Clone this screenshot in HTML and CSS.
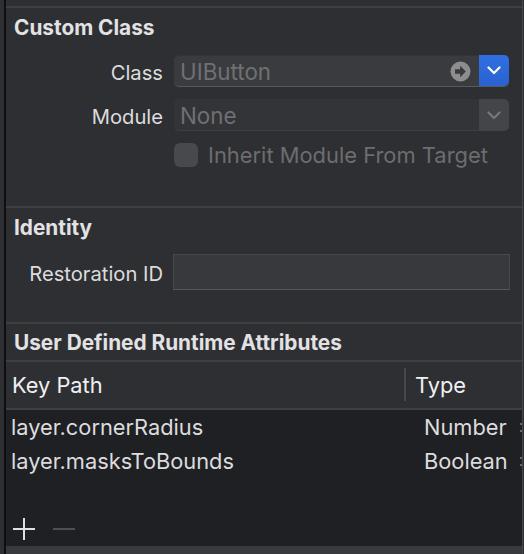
FILE: index.html
```html
<!DOCTYPE html>
<html>
<head>
<meta charset="utf-8">
<link rel="stylesheet" href="styles.css">
</head>
<body>
<div class="frame">
  <div class="panel">
    <div class="topstrip"></div>

    <section class="sec sec-custom">
      <h2 class="heading">Custom Class</h2>
      <div class="row">
        <span class="label">Class</span>
        <div class="combo">
          <span class="combo-text">UIButton</span>
          <svg class="goto" width="21" height="21" viewBox="0 0 21 21">
            <circle cx="10.5" cy="10.5" r="10" fill="#8d8d90"/>
            <path d="M5 8.3h5.2V4.8l5.6 5.7-5.6 5.7v-3.5H5z" fill="#3a3b3e"/>
          </svg>
          <span class="combo-btn blue">
            <svg width="14" height="9" viewBox="0 0 14 9"><path d="M1.5 1.5l5.5 5.5 5.5-5.5" fill="none" stroke="#fff" stroke-width="2.2" stroke-linecap="round" stroke-linejoin="round"/></svg>
          </span>
        </div>
      </div>
      <div class="row">
        <span class="label">Module</span>
        <div class="combo disabled">
          <span class="combo-text">None</span>
          <span class="combo-btn gray">
            <svg width="14" height="9" viewBox="0 0 14 9"><path d="M1.5 1.5l5.5 5.5 5.5-5.5" fill="none" stroke="#77787b" stroke-width="2.2" stroke-linecap="round" stroke-linejoin="round"/></svg>
          </span>
        </div>
      </div>
      <div class="row check-row">
        <span class="checkbox"></span>
        <span class="check-label">Inherit Module From Target</span>
      </div>
    </section>

    <section class="sec sec-identity">
      <h2 class="heading">Identity</h2>
      <div class="row">
        <span class="label">Restoration ID</span>
        <div class="textfield"></div>
      </div>
    </section>

    <section class="sec sec-udra">
      <h2 class="heading">User Defined Runtime Attributes</h2>
    </section>

    <div class="table-head">
      <span class="col-key">Key Path</span>
      <span class="col-div"></span>
      <span class="col-type">Type</span>
    </div>

    <div class="table-body">
      <div class="trow"><span class="tkey">layer.cornerRadius</span><span class="ttype">Number</span><span class="tcut"></span></div>
      <div class="trow"><span class="tkey">layer.masksToBounds</span><span class="ttype">Boolean</span><span class="tcut"></span></div>
      <div class="tools">
        <span class="plus"></span>
        <span class="minus"></span>
      </div>
    </div>
    <div class="bottombar"></div>
  </div>
</div>
</body>
</html>
```

FILE: styles.css
```css
* { box-sizing: border-box; margin: 0; padding: 0; }

html, body {
  width: 524px;
  height: 554px;
  overflow: hidden;
  background: #2e2f32;
}

body {
  font-family: Inter, "Noto Sans", "Liberation Sans", sans-serif;
  color: #dedee0;
}

.frame {
  display: flex;
  height: 554px;
  padding-left: 4px;
  padding-right: 1px;
}

.panel {
  flex: 1;
  display: flex;
  flex-direction: column;
  border-left: 2px solid #0e0e10;
  border-right: 1px solid #45464a;
  background: #2e2f32;
}

.topstrip {
  height: 8px;
  border-bottom: 2px solid #3e3f43;
  flex: none;
}

.sec {
  display: flex;
  flex-direction: column;
  border-bottom: 2px solid #3e3f43;
  flex: none;
}

.heading {
  font-size: 20.8px;
  font-weight: 700;
  color: #e2e2e4;
  padding-left: 8px;
  height: 24px;
  line-height: 24px;
}

.sec-custom { height: 200px; padding-top: 8px; }
.sec-identity { height: 116px; padding-top: 8px; }
.sec-udra { height: 38px; padding-top: 7px; }

.row {
  display: flex;
  align-items: center;
  height: 32px;
}

.sec-custom .row:nth-of-type(1) { margin-top: 15px; }
.sec-custom .row + .row { margin-top: 12px; }
.sec-custom .check-row { margin-top: 14px; height: 24px; }

.label {
  width: 168px;
  text-align: right;
  font-size: 20.2px;
  color: #dcdcde;
  padding-right: 11px;
  padding-top: 3px;
  flex: none;
}

.combo {
  width: 335px;
  height: 32px;
  display: flex;
  align-items: center;
  background: #3a3b3e;
  border-radius: 5px;
  border-bottom: 1px solid #58595c;
  border-top: 1px solid #333437;
}

.combo.disabled {
  background: #333437;
  border-bottom: 1px solid #3e3f42;
}

.combo-text {
  flex: 1;
  padding-left: 6px;
  font-size: 22.4px;
  color: #6f7073;
}

.goto {
  margin-right: 8px;
  flex: none;
}

.combo-btn {
  width: 30px;
  height: 32px;
  margin-top: -1px;
  margin-bottom: -1px;
  display: flex;
  align-items: center;
  justify-content: center;
  border-radius: 0 5px 5px 0;
  flex: none;
}

.combo-btn.blue {
  background: linear-gradient(#2f6fe3, #2a62cf);
  height: 31px;
  align-self: flex-start;
  margin-top: -1px;
}

.combo-btn.gray {
  background: #444548;
}

.check-row {
  padding-left: 168px;
}

.checkbox {
  width: 24px;
  height: 24px;
  border-radius: 6px;
  background: #48494c;
  flex: none;
}

.check-label {
  margin-left: 10px;
  font-size: 21.9px;
  color: #6c6d70;
}

.sec-identity .row {
  margin-top: 14px;
  height: 36px;
}

.sec-identity .label {
  width: 167px;
  padding-right: 10px;
}

.textfield {
  width: 337px;
  height: 36px;
  background: #38393c;
  border: 1px solid #48494c;
  border-bottom-color: #56575a;
}

.table-head {
  height: 48px;
  display: flex;
  align-items: center;
  border-bottom: 2px solid #3e3f43;
  flex: none;
  font-size: 21.8px;
  color: #f0f0f2;
}

.col-key {
  width: 398px;
  padding-left: 6px;
}

.col-div {
  width: 2px;
  height: 33px;
  background: #47484b;
  margin-top: -2px;
}

.col-type {
  padding-left: 9px;
}

.table-body {
  flex: 1;
  background: #1f2023;
  display: flex;
  flex-direction: column;
}

.trow {
  height: 34px;
  display: flex;
  align-items: center;
  font-size: 21.8px;
  color: #dcdcde;
  position: relative;
}

.tkey {
  width: 418px;
  padding-left: 5px;
}

.ttype {
  flex: 1;
}

.tcut {
  position: absolute;
  right: 0;
  top: 13px;
  width: 2px;
  height: 9px;
  border-top: 2px solid #6a6b6e;
  border-bottom: 2px solid #6a6b6e;
}

.tools {
  margin-top: auto;
  height: 34px;
  display: flex;
  align-items: center;
  padding-left: 7px;
  padding-bottom: 0;
}

.plus {
  width: 22px;
  height: 22px;
  position: relative;
  flex: none;
}

.plus::before, .plus::after {
  content: "";
  position: absolute;
  background: #e0e0e2;
}

.plus::before { left: 0; right: 0; top: 10px; height: 2px; }
.plus::after { top: 0; bottom: 0; left: 10px; width: 2px; }

.minus {
  width: 22px;
  height: 2px;
  background: #4e4f52;
  margin-left: 18px;
  flex: none;
}

.bottombar {
  height: 8px;
  background: #38393c;
  flex: none;
}
```
